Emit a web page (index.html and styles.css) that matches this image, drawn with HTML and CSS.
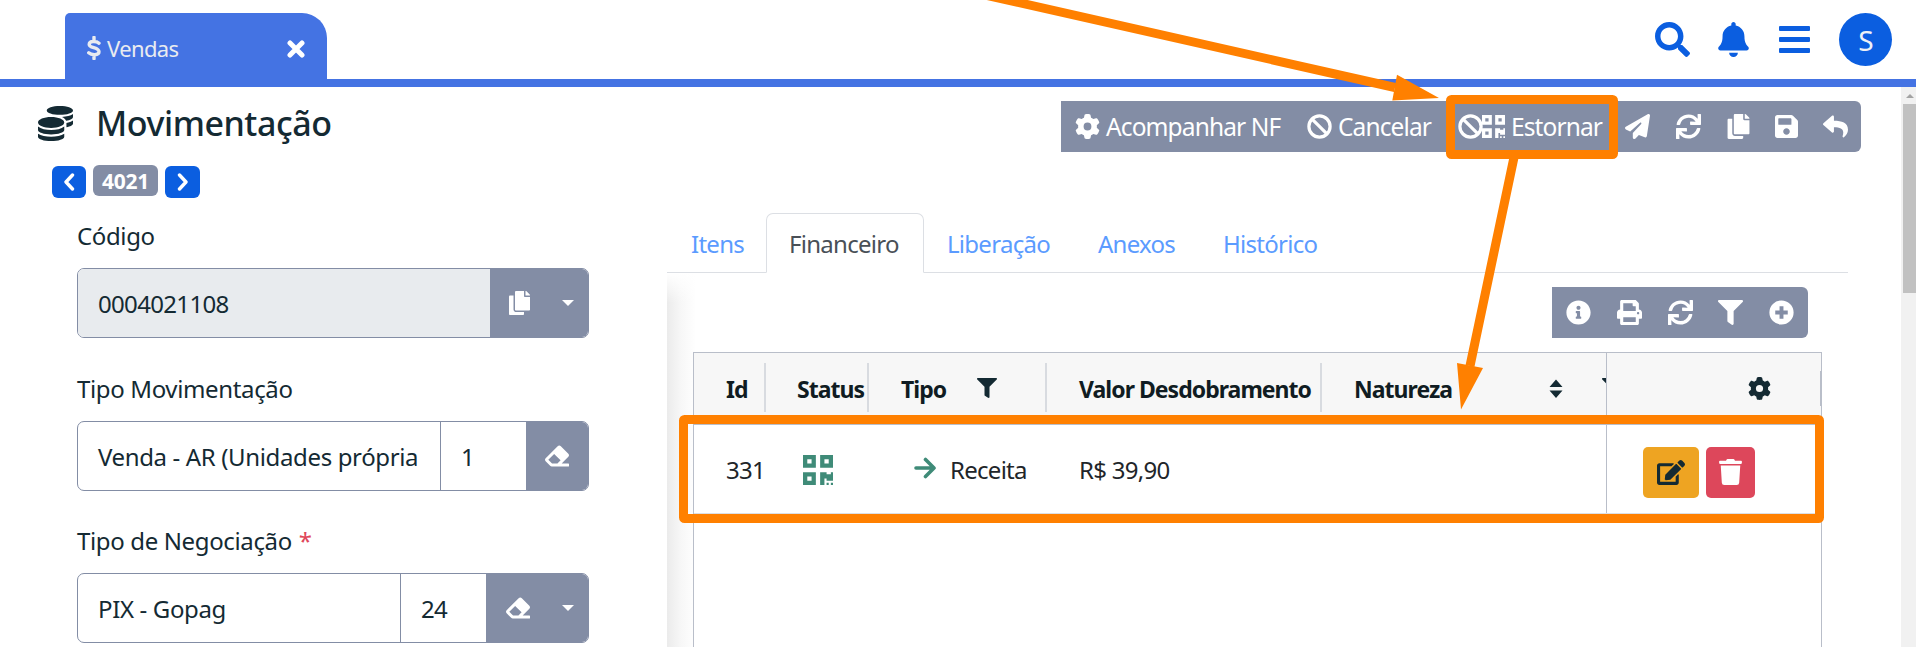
FILE: index.html
```html
<!DOCTYPE html>
<html lang="pt-BR">
<head>
<meta charset="utf-8">
<title>Vendas - Movimentação</title>
<link rel="stylesheet" href="styles.css">
</head>
<body>
<svg class="defs" aria-hidden="true">
  <symbol id="search" viewBox="0 0 512 512"><path d="M505 442.7L405.3 343c-4.5-4.5-10.6-7-17-7H372c27.6-35.3 44-79.7 44-128C416 93.1 322.9 0 208 0S0 93.1 0 208s93.1 208 208 208c48.3 0 92.7-16.4 128-44v16.3c0 6.4 2.5 12.5 7 17l99.7 99.7c9.4 9.4 24.6 9.4 33.9 0l28.3-28.3c9.4-9.4 9.4-24.6.1-34zM208 336c-70.7 0-128-57.2-128-128 0-70.7 57.2-128 128-128 70.7 0 128 57.2 128 128 0 70.7-57.2 128-128 128z"/></symbol>
  <symbol id="bell" viewBox="0 0 448 512"><path d="M224 512c35.32 0 63.97-28.65 63.97-64H160.03c0 35.35 28.65 64 63.97 64zm215.39-149.71c-19.32-20.76-55.47-51.99-55.47-154.29 0-77.7-54.48-139.9-127.94-155.16V32c0-17.67-14.32-32-31.98-32s-31.98 14.33-31.98 32v20.84C118.56 68.1 64.08 130.3 64.08 208c0 102.3-36.15 133.53-55.47 154.29-6 6.45-8.66 14.16-8.61 21.71.11 16.4 12.98 32 32.1 32h383.8c19.12 0 32-15.6 32.1-32 .05-7.55-2.61-15.27-8.61-21.71z"/></symbol>
  <symbol id="gear" viewBox="0 0 512 512"><path d="M495.9 166.6c3.2 8.7 .5 18.4-6.4 24.6l-43.3 39.4c1.1 8.3 1.7 16.8 1.7 25.4s-.6 17.1-1.7 25.4l43.3 39.4c6.9 6.2 9.6 15.9 6.4 24.6c-4.4 11.9-9.7 23.3-15.8 34.3l-4.7 8.1c-6.6 11-14 21.4-22.1 31.2c-5.9 7.2-15.7 9.6-24.5 6.8l-55.7-17.7c-13.4 10.3-28.2 18.9-44 25.4l-12.5 57.1c-2 9.1-9 16.3-18.2 17.8c-13.8 2.3-28 3.5-42.5 3.5s-28.7-1.2-42.5-3.5c-9.2-1.5-16.2-8.7-18.2-17.8l-12.5-57.1c-15.8-6.5-30.6-15.1-44-25.4L83.1 425.9c-8.8 2.8-18.6 .3-24.5-6.8c-8.1-9.8-15.5-20.2-22.1-31.2l-4.7-8.1c-6.1-11-11.4-22.4-15.8-34.3c-3.2-8.7-.5-18.4 6.4-24.6l43.3-39.4C64.6 273.1 64 264.6 64 256s.6-17.1 1.7-25.4L22.4 191.2c-6.9-6.2-9.6-15.9-6.4-24.6c4.4-11.9 9.7-23.3 15.8-34.3l4.7-8.1c6.6-11 14-21.4 22.1-31.2c5.9-7.2 15.7-9.6 24.5-6.8l55.7 17.7c13.4-10.3 28.2-18.9 44-25.4l12.5-57.1c2-9.1 9-16.3 18.2-17.8C227.3 1.2 241.5 0 256 0s28.7 1.2 42.5 3.5c9.2 1.5 16.2 8.7 18.2 17.8l12.5 57.1c15.8 6.5 30.6 15.1 44 25.4l55.7-17.7c8.8-2.8 18.6-.3 24.5 6.8c8.1 9.8 15.5 20.2 22.1 31.2l4.7 8.1c6.1 11 11.4 22.4 15.8 34.3zM256 336a80 80 0 1 0 0-160 80 80 0 1 0 0 160z"/></symbol>
  <symbol id="ban" viewBox="0 0 512 512"><g fill="none" stroke="currentColor" stroke-width="66"><circle cx="256" cy="256" r="217"/><path d="M104 104L408 408"/></g></symbol>
  <symbol id="qr" viewBox="0 32 448 448"><path d="M0 224h192V32H0v192zM64 96h64v64H64V96zm192-64v192h192V32H256zm128 128h-64V96h64v64zM0 480h192V288H0v192zm64-128h64v64H64v-64zm352-64h32v128h-96v-32h-32v96h-64V288h96v32h64v-32zm0 160h32v32h-32v-32zm-64 0h32v32h-32v-32z"/></symbol>
  <symbol id="coins" viewBox="0 0 512 512"><path d="M0 405.3V448c0 35.3 86 64 192 64s192-28.7 192-64v-42.7C342.7 434.4 267.2 448 192 448S41.3 434.4 0 405.3zM320 128c106 0 192-28.7 192-64S426 0 320 0 128 28.7 128 64s86 64 192 64zM0 300.4V352c0 35.3 86 64 192 64s192-28.7 192-64v-51.6c-41.3 34-116.9 51.6-192 51.6S41.3 334.4 0 300.4zm416 11c57.3-11.1 96-31.7 96-55.4v-42.7c-23.2 16.4-57.3 27.6-96 34.5v63.6zM192 160C86 160 0 195.8 0 240s86 80 192 80 192-35.8 192-80-86-80-192-80zm219.3 56.3c60-10.8 100.7-32 100.7-56.3v-42.7c-35.5 25.1-96.5 38.6-160.7 41.8 29.5 14.3 51.2 33.5 60 57.2z"/></symbol>
  <symbol id="plane" viewBox="0 0 512 512"><path d="M498.1 5.6c10.1 7 15.4 19.1 13.5 31.2l-64 416c-1.5 9.7-7.4 18.2-16 23s-18.9 5.4-28 1.6L284 427.7l-68.5 74.1c-8.9 9.7-22.9 12.9-35.2 8.1S160 493.2 160 480V396.4c0-4 1.5-7.8 4.2-10.7L331.8 202.8c5.8-6.3 5.6-16-.4-22s-15.7-6.4-22-.7L106 360.8 17.7 316.6C7.1 311.3 .3 300.7 0 288.9s5.9-22.8 16.1-28.7l448-256c10.7-6.1 23.9-5.5 34 1.4z"/></symbol>
  <symbol id="sync" viewBox="0 0 512 512"><path d="M440.65 12.57l4 82.77A247.16 247.16 0 0 0 255.83 8C134.73 8 33.91 94.92 12.29 209.82A12 12 0 0 0 24.09 224h49.05a12 12 0 0 0 11.67-9.26 175.91 175.91 0 0 1 317-56.94l-101.46-4.86a12 12 0 0 0-12.57 12v47.41a12 12 0 0 0 12 12H500a12 12 0 0 0 12-12V12a12 12 0 0 0-12-12h-47.37a12 12 0 0 0-11.98 12.57zM255.83 432a175.61 175.61 0 0 1-146-77.8l101.8 4.87a12 12 0 0 0 12.57-12v-47.4a12 12 0 0 0-12-12H12a12 12 0 0 0-12 12V500a12 12 0 0 0 12 12h47.35a12 12 0 0 0 12-12.6l-4.15-82.57A247.17 247.17 0 0 0 255.83 504c121.11 0 221.93-86.92 243.55-201.82a12 12 0 0 0-11.8-14.18h-49.05a12 12 0 0 0-11.67 9.26A175.86 175.86 0 0 1 255.83 432z"/></symbol>
  <symbol id="copy" viewBox="0 0 448 512"><path d="M320 448v40c0 13.255-10.745 24-24 24H24c-13.255 0-24-10.745-24-24V120c0-13.255 10.745-24 24-24h72v296c0 30.879 25.121 56 56 56h168zm0-344V0H152c-13.255 0-24 10.745-24 24v368c0 13.255 10.745 24 24 24h272c13.255 0 24-10.745 24-24V128H344c-13.2 0-24-10.8-24-24zm120.971-31.029L375.029 7.029A24 24 0 0 0 358.059 0H352v96h96v-6.059a24 24 0 0 0-7.029-16.97z"/></symbol>
  <symbol id="save" viewBox="0 32 448 448"><path d="M433.941 129.941l-83.882-83.882A48 48 0 0 0 316.118 32H48C21.49 32 0 53.49 0 80v352c0 26.51 21.49 48 48 48h352c26.51 0 48-21.49 48-48V163.882a48 48 0 0 0-14.059-33.941zM224 416c-35.346 0-64-28.654-64-64 0-35.346 28.654-64 64-64s64 28.654 64 64c0 35.346-28.654 64-64 64zm96-304.52V212c0 6.627-5.373 12-12 12H76c-6.627 0-12-5.373-12-12V108c0-6.627 5.373-12 12-12h228.52c3.183 0 6.235 1.264 8.485 3.515l3.48 3.48A11.996 11.996 0 0 1 320 111.48z"/></symbol>
  <symbol id="reply" viewBox="0 0 512 512"><path d="M8.309 189.836L184.313 37.851C199.719 24.546 224 35.347 224 56.015v80.053c160.629 1.839 288 34.032 288 186.258 0 61.441-39.581 122.309-83.333 154.132-13.653 9.931-33.111-2.533-28.077-18.631 45.344-145.012-21.507-183.51-176.59-185.742V360c0 20.7-24.3 31.453-39.687 18.164l-176.004-152c-11.071-9.562-11.086-26.753 0-36.328z"/></symbol>
  <symbol id="eraser" viewBox="0 0 512 512"><path d="M497.941 273.941c18.745-18.745 18.745-49.137 0-67.882l-160-160c-18.745-18.745-49.136-18.746-67.883 0l-256 256c-18.745 18.745-18.745 49.137 0 67.882l96 96A48.004 48.004 0 0 0 144 480h356c6.627 0 12-5.373 12-12v-40c0-6.627-5.373-12-12-12H355.883l142.058-142.059zm-302.627-62.627l137.373 137.373L265.373 416H150.628l-80-80 124.686-124.686z"/></symbol>
  <symbol id="info" viewBox="0 0 512 512"><path d="M256 8C119.043 8 8 119.083 8 256c0 136.997 111.043 248 248 248s248-111.003 248-248C504 119.083 392.957 8 256 8zm0 110c23.196 0 42 18.804 42 42s-18.804 42-42 42-42-18.804-42-42 18.804-42 42-42zm56 254c0 6.627-5.373 12-12 12h-88c-6.627 0-12-5.373-12-12v-24c0-6.627 5.373-12 12-12h12v-64h-12c-6.627 0-12-5.373-12-12v-24c0-6.627 5.373-12 12-12h64c6.627 0 12 5.373 12 12v100h12c6.627 0 12 5.373 12 12v24z"/></symbol>
  <symbol id="print" viewBox="0 0 512 512"><path d="M448 192V77.25c0-8.49-3.37-16.62-9.37-22.63L393.37 9.37c-6-6-14.14-9.37-22.63-9.37H96C78.33 0 64 14.33 64 32v160c-35.35 0-64 28.65-64 64v112c0 8.84 7.16 16 16 16h48v96c0 17.67 14.33 32 32 32h320c17.67 0 32-14.33 32-32v-96h48c8.84 0 16-7.16 16-16V256c0-35.35-28.65-64-64-64zm-64 256H128v-96h256v96zm0-224H128V64h192v48c0 8.84 7.16 16 16 16h48v96zm48 72c-13.25 0-24-10.75-24-24 0-13.26 10.75-24 24-24s24 10.74 24 24c0 13.25-10.75 24-24 24z"/></symbol>
  <symbol id="filter" viewBox="0 0 512 512"><path d="M487.976 0H24.028C2.71 0-8.047 25.866 7.058 40.971L192 225.941V432c0 7.831 3.821 15.17 10.237 19.662l80 55.98C298.02 518.69 320 507.493 320 487.98V225.941l184.947-184.97C520.021 25.896 509.338 0 487.976 0z"/></symbol>
  <symbol id="plus" viewBox="0 0 512 512"><path fill-rule="evenodd" d="M256 8a248 248 0 1 0 0 496a248 248 0 1 0 0-496zM216 128h80v88h88v80h-88v88h-80v-88h-88v-80h88z"/></symbol>
  <symbol id="edit" viewBox="0 0 576 512"><path d="M402.6 83.2l90.2 90.2c3.8 3.8 3.8 10 0 13.8L274.4 405.6l-92.8 10.3c-12.4 1.4-22.9-9.1-21.5-21.5l10.3-92.8L388.8 83.2c3.8-3.8 10-3.8 13.8 0zm162-22.9l-48.8-48.8c-15.2-15.2-39.9-15.2-55.2 0l-35.4 35.4c-3.8 3.8-3.8 10 0 13.8l90.2 90.2c3.8 3.8 10 3.8 13.8 0l35.4-35.4c15.2-15.3 15.2-40 0-55.2zM384 346.2V448H64V128h229.8c3.2 0 6.2-1.3 8.5-3.5l40-40c7.6-7.6 2.2-20.5-8.5-20.5H48C21.5 64 0 85.5 0 112v352c0 26.5 21.5 48 48 48h352c26.5 0 48-21.5 48-48V306.2c0-10.7-12.9-16-20.5-8.5l-40 40c-2.2 2.3-3.5 5.3-3.5 8.5z"/></symbol>
  <symbol id="trash" viewBox="0 0 448 512"><path d="M432 32H312l-9.4-18.7A24 24 0 0 0 281.1 0H166.8a23.72 23.72 0 0 0-21.4 13.3L136 32H16A16 16 0 0 0 0 48v32a16 16 0 0 0 16 16h416a16 16 0 0 0 16-16V48a16 16 0 0 0-16-16zM53.2 467a48 48 0 0 0 47.9 45h245.8a48 48 0 0 0 47.9-45L416 128H32z"/></symbol>
</svg>

<header class="topbar">
  <div class="window-tab">
    <svg class="dollar" viewBox="0 0 14 24"><path d="M12 7.2C9.5 5 2.4 4.6 2.2 8.3C2 12.4 12 11 12 15.8C12 19.6 4.500 19.400 1.700 16.800M7 1.300V5M7 19V22.700"/></svg>
    <span class="window-name">Vendas</span>
    <svg class="close" viewBox="0 0 18 18"><path d="M3 3L15 15M15 3L3 15"/></svg>
  </div>
  <div class="top-actions">
    <svg class="i-search"><use href="#search"/></svg>
    <svg class="i-bell"><use href="#bell"/></svg>
    <div class="burger"><i></i><i></i><i></i></div>
    <div class="avatar">S</div>
  </div>
</header>

<div class="body">
  <main class="page">
    <div class="page-head">
      <div>
        <h1 class="title"><svg class="i-coins"><use href="#coins"/></svg><span>Movimentação</span></h1>
        <div class="pager">
          <button class="step prev"><svg viewBox="0 0 12 18"><path d="M9.500 2L3 9L9.500 16"/></svg></button>
          <span class="record">4021</span>
          <button class="step next"><svg viewBox="0 0 12 18"><path d="M2.500 2L9 9L2.500 16"/></svg></button>
        </div>
      </div>
      <div class="toolbar main-tools">
        <button class="tool track"><svg class="i25"><use href="#gear"/></svg><span>Acompanhar NF</span></button>
        <button class="tool cancel"><svg class="i25"><use href="#ban"/></svg><span>Cancelar</span></button>
        <button class="tool revert"><svg class="i25"><use href="#ban"/></svg><svg class="i-qr"><use href="#qr"/></svg><span>Estornar</span></button>
        <button class="tool icon"><svg class="i25"><use href="#plane"/></svg></button>
        <button class="tool icon"><svg class="i25"><use href="#sync"/></svg></button>
        <button class="tool icon narrow"><svg class="i-copy"><use href="#copy"/></svg></button>
        <button class="tool icon narrow"><svg class="i-save"><use href="#save"/></svg></button>
        <button class="tool"><svg class="i25"><use href="#reply"/></svg></button>
      </div>
    </div>

    <div class="columns">
      <form class="form">
        <div class="group">
          <label class="label">Código</label>
          <div class="field">
            <div class="value readonly">0004021108</div>
            <div class="addon"><svg class="a-copy"><use href="#copy"/></svg></div>
            <div class="drop"><i class="caret"></i></div>
          </div>
        </div>
        <div class="group">
          <label class="label">Tipo Movimentação</label>
          <div class="field">
            <div class="value clip">Venda - AR (Unidades própria</div>
            <div class="code wide">1</div>
            <div class="addon"><svg class="a-eraser"><use href="#eraser"/></svg></div>
          </div>
        </div>
        <div class="group last">
          <label class="label">Tipo de Negociação <span class="req">*</span></label>
          <div class="field">
            <div class="value">PIX - Gopag</div>
            <div class="code">24</div>
            <div class="addon erase"><svg class="a-eraser"><use href="#eraser"/></svg></div>
            <div class="drop"><i class="caret"></i></div>
          </div>
        </div>
      </form>

      <section class="detail">
        <nav class="tabs">
          <a class="tab itens">Itens</a>
          <a class="tab active">Financeiro</a>
          <a class="tab lib">Liberação</a>
          <a class="tab anexos">Anexos</a>
          <a class="tab hist">Histórico</a>
        </nav>
        <div class="panel">
          <div class="toolbar grid-tools">
            <svg class="i25"><use href="#info"/></svg>
            <svg class="i25"><use href="#print"/></svg>
            <svg class="i25"><use href="#sync"/></svg>
            <svg class="i25"><use href="#filter"/></svg>
            <svg class="i25"><use href="#plus"/></svg>
          </div>
          <div class="grid">
            <div class="row head">
              <div class="cell c-id"><span>Id</span></div>
              <div class="cell c-status"><span>Status</span></div>
              <div class="cell c-tipo"><span>Tipo</span><svg class="h-filter"><use href="#filter"/></svg></div>
              <div class="cell c-valor"><span>Valor Desdobramento</span></div>
              <div class="cell c-nat"><span>Natureza</span><svg class="sort" viewBox="0 0 14 20"><path d="M7 .5L13.500 8H.5zM7 19L13.500 11.500H.5z"/></svg><svg class="h-filter cut"><use href="#filter"/></svg></div>
              <div class="cell c-act"><svg class="h-gear"><use href="#gear"/></svg></div>
            </div>
            <div class="row data">
              <div class="cell c-id"><span>331</span></div>
              <div class="cell c-status"><svg class="qr-status"><use href="#qr"/></svg></div>
              <div class="cell c-tipo"><svg class="arrow-in" viewBox="0 0 22 22"><path d="M2 11H19M11.500 2.500L20 11L11.500 19.500"/></svg><span>Receita</span></div>
              <div class="cell c-valor"><span>R$ 39,90</span></div>
              <div class="cell c-nat"></div>
              <div class="cell c-act">
                <button class="btn edit"><svg><use href="#edit"/></svg></button>
                <button class="btn trash"><svg><use href="#trash"/></svg></button>
              </div>
            </div>
          </div>
        </div>
      </section>
    </div>
  </main>
  <div class="scrollbar"><i class="up"></i><div class="thumb"></div></div>
</div>

<svg class="annotations" viewBox="0 0 1916 647">
  <path class="line" d="M985 -5L1395 87.500M1514.500 155L1470 366"/>
  <path class="tip" d="M1397 74.700L1392.300 100.500L1439 98zM1457 363L1483 368L1461 409.500z"/>
  <rect class="line" x="1450.500" y="99.500" width="163" height="55" rx="1"/>
  <rect class="line" x="683.500" y="419.500" width="1136" height="99" rx="1"/>
</svg>
</body>
</html>
```

FILE: styles.css
```css
* { box-sizing: border-box; }
body {
  margin: 0;
  height: 647px;
  overflow: hidden;
  background: #fff;
  color: #142a33;
  font: 24px/36px "Noto Sans", "Open Sans", sans-serif;
  letter-spacing: -0.04em;
}
svg { display: block; flex: none; fill: currentColor; }
button { border: 0; padding: 0; margin: 0; font: inherit; color: inherit; letter-spacing: inherit; background: none; }
span { white-space: nowrap; }
.defs { position: absolute; width: 0; height: 0; }

/* Top bar */
.topbar {
  display: flex;
  justify-content: space-between;
  height: 87px;
  padding: 13px 24px 0 65px;
  border-bottom: 8px solid #4473e3;
}
.window-tab {
  display: flex;
  align-items: center;
  width: 262px;
  height: 66px;
  padding: 4px 22px 0 22px;
  border-radius: 5px 25px 0 0;
  background: #4473e3;
  color: #e9ebf0;
  font-size: 22px;
  letter-spacing: -0.028em;
}
.window-name { margin-left: 6px; }
.dollar { width: 14px; height: 24px; fill: none; stroke: #e9ebf0; stroke-width: 3.4; stroke-linecap: round; }
.close { width: 18px; height: 18px; margin: 2px 0 0 auto; fill: none; stroke: #fff; stroke-width: 5; stroke-linecap: round; }
.top-actions { display: flex; align-items: center; height: 53px; color: #0b5ee0; }
.i-search { width: 35px; height: 35px; margin-right: 28px; }
.i-bell { width: 31px; height: 35px; margin-right: 30px; }
.burger { display: grid; gap: 6px; width: 31px; margin-right: 29px; }
.burger i { height: 5px; border-radius: 1px; background: #0b5ee0; }
.avatar { width: 53px; height: 53px; border-radius: 50%; background: #0b5ee0; color: #eef1f6; font-size: 28px; line-height: 55px; text-align: center; }

/* Page frame */
.body { display: flex; height: 560px; overflow: hidden; }
.page { display: flex; flex-direction: column; flex: 1; min-width: 0; }
.scrollbar { width: 15px; padding: 7px 0 0 2px; background: #f1f1f1; }
.up { display: block; margin: 0 0 6px 3px; width: 0; border: 4px solid transparent; border-top: 0; border-bottom: 4px solid #a3a3a3; }
.thumb { height: 189px; background: #c1c1c1; }

.page-head { display: flex; flex: none; justify-content: space-between; height: 117px; padding: 14px 40px 0 38px; }
.title { display: flex; align-items: center; height: 44px; margin: 0; font-size: 34px; font-weight: 500; letter-spacing: -0.013em; }
.i-coins { width: 35px; height: 35px; margin-right: 23px; }
.pager { display: flex; gap: 7px; padding: 19px 0 0 14px; }
.step { display: grid; place-items: center; width: 34px; height: 32px; margin-top: 2px; border-radius: 6px; background: #0b5ee0; }
.next { width: 35px; }
.step svg { width: 12px; height: 18px; fill: none; stroke: #fff; stroke-width: 3.4; stroke-linecap: round; stroke-linejoin: round; }
.record { width: 65px; height: 31px; margin-top: 1px; border-radius: 6px; background: #838da5; color: #fff; font-size: 21px; font-weight: 700; line-height: 32px; text-align: center; letter-spacing: -0.01em; }

.toolbar { display: flex; align-items: center; height: 51px; border-radius: 0 6px 6px 0; background: #838da5; color: #fff; }
.main-tools { width: 800px; padding-left: 14px; font-size: 24.5px; letter-spacing: -0.036em; }
.tool { display: flex; flex: none; align-items: center; }
.tool span { margin-left: 6px; }
.track { width: 232px; }
.cancel { width: 151px; }
.revert { width: 167px; }
.revert .i-qr { margin-left: -1px; }
.i25 { width: 25px; height: 25px; }
.i-qr { width: 23px; height: 23px; }
.i-copy { width: 23px; height: 25px; }
.i-save { width: 23px; height: 23px; }
.icon { width: 51px; }
.icon.narrow { width: 48px; }

/* Left form */
.columns { display: flex; flex: 1; min-height: 0; padding-left: 77px; }
.form { display: flex; flex-direction: column; gap: 33px; width: 512px; padding-top: 14px; letter-spacing: -0.015em; }
.label { display: block; height: 36px; margin-bottom: 14px; }
.last { margin-top: -1px; }
.req { color: #e0475a; margin-left: 1px; }
.field { display: flex; height: 70px; border: 1px solid #838da5; border-radius: 7px; overflow: hidden; line-height: 69px; }
.value { flex: 1; min-width: 0; padding-left: 20px; white-space: nowrap; }
.readonly { background: #e8ebee; letter-spacing: -0.028em; }
.code { width: 86px; padding-left: 20px; border-left: 1px solid #838da5; letter-spacing: -0.034em; }
.addon { display: flex; align-items: center; justify-content: center; width: 62px; background: #838da5; color: #fff; }
.readonly + .addon { width: 60px; }
.addon.erase { width: 64px; }
.drop { display: flex; align-items: center; width: 38px; padding-left: 12px; background: #838da5; }
.a-copy { width: 21px; height: 24px; margin-right: 2px; }
.a-eraser { width: 24px; height: 24px; }
.caret { width: 0; border: 6px solid transparent; border-top: 6px solid #fff; border-bottom: 0; }

/* Detail tabs */
.detail { display: flex; flex-direction: column; width: 1181px; margin-left: 78px; }
.tabs { display: flex; flex: none; height: 69px; padding: 9px 0 0 0; border-bottom: 1px solid #dcdfe4; color: #5b9bff; line-height: 61px; letter-spacing: -0.03em; }
.tab { height: 60px; white-space: nowrap; }
.itens { width: 99px; padding-left: 24px; }
.active { width: 158px; padding-left: 22px; border: 1px solid #dcdfe4; border-bottom-color: #fff; border-radius: 7px 7px 0 0; background: #fff; color: #495057; line-height: 60px; }
.lib { width: 150px; padding-left: 23px; }
.anexos { width: 126px; padding-left: 24px; }
.hist { padding-left: 23px; }
.panel { display: flex; flex-direction: column; flex: 1; min-height: 0; padding: 14px 26px 0 26px; background: linear-gradient(to bottom, #fff 0, rgba(255,255,255,0) 30px), linear-gradient(to right, #ebebeb 0, #f7f7f7 14px, #fff 29px); }

/* Data grid */
.grid-tools { flex: none; justify-content: space-between; width: 256px; margin: 0 14px 14px auto; padding: 0 14px; }
.grid { flex: 1; width: 1129px; border: 1px solid #b9bec9; border-bottom: 0; background: #fff; }
.row { display: grid; grid-template-columns: 72px 103px 178px 275px 284px 1fr; border-bottom: 1px solid #b9bec9; }
.cell { display: flex; align-items: center; min-width: 0; overflow: hidden; }
.head { height: 72px; background: #f7f7f7; color: #101c22; font-weight: 700; font-size: 23px; letter-spacing: -0.042em; }
.data { height: 89px; color: #212529; border-color: #dcdfe4; letter-spacing: -0.03em; }
.data .cell { padding-top: 1px; }
.head .c-id, .head .c-status, .head .c-tipo, .head .c-valor {
  background: linear-gradient(#d8dbe0, #d8dbe0) right 10px / 2px 49px no-repeat;
}
.c-id { padding-left: 32px; }
.c-status { padding-left: 31px; }
.c-tipo { padding-left: 32px; }
.c-valor { padding-left: 32px; }
.c-nat { padding-left: 32px; }
.c-act { border-left: 1px solid #b9bec9; padding-left: 36px; }
.head .c-act { padding-left: 141px; background: linear-gradient(#b9bec9, #b9bec9) right 18px / 1px 35px no-repeat; }
.h-filter { width: 20px; height: 20px; margin: 0 0 1px 31px; color: #142a33; }
.sort { width: 14px; height: 20px; margin-left: 97px; color: #142a33; }
.cut { margin-left: 39px; }
.h-gear { width: 23px; height: 23px; color: #142a33; }
.qr-status { width: 30px; height: 30px; margin-left: 6px; }
.qr-status, .arrow-in { color: #3f8b78; }
.arrow-in { width: 22px; height: 22px; margin: 0 14px 3px 13px; fill: none; stroke: currentColor; stroke-width: 3.6; stroke-linecap: round; stroke-linejoin: round; }
.btn { display: grid; place-items: center; height: 51px; margin-top: 5px; border-radius: 5px; }
.edit { width: 56px; margin-right: 7px; background: #eea422; color: #142a33; }
.edit svg { width: 28px; height: 25px; }
.trash { width: 49px; background: #dd475b; color: #fff; }
.trash svg { width: 23px; height: 26px; }

/* Callouts drawn over the page */
.annotations { position: absolute; left: 0; top: 0; width: 1916px; height: 647px; pointer-events: none; }
.annotations .line { fill: none; stroke: #ff8000; stroke-width: 9; stroke-linejoin: round; }
.annotations .tip { fill: #ff8000; }
```
